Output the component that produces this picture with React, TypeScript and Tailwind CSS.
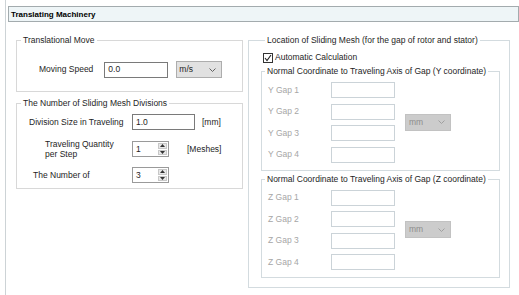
import React from 'react'

const Y_ROWS = ['Y Gap 1', 'Y Gap 2', 'Y Gap 3', 'Y Gap 4']
const Z_ROWS = ['Z Gap 1', 'Z Gap 2', 'Z Gap 3', 'Z Gap 4']

function Chevron({ color = '#606060' }: { color?: string }) {
  return (
    <svg width="7" height="4" viewBox="0 0 7 4" className="shrink-0">
      <polyline points="0.5,0.5 3.5,3.5 6.5,0.5" fill="none" stroke={color} strokeWidth="1" />
    </svg>
  )
}

function Select({ value, disabled }: { value: string; disabled?: boolean }) {
  return (
    <div
      className={
        disabled
          ? 'flex items-center justify-between w-[46px] h-[17px] border border-[#c2c2c2] bg-[#cccccc] pl-[3px] pr-[5px] text-[#8c8c8c]'
          : 'flex items-center justify-between w-[46px] h-[17px] border border-[#adadad] bg-[#e1e1e1] pl-[2px] pr-[5px]'
      }
    >
      <span>{value}</span>
      <Chevron color={disabled ? '#a0a0a0' : '#606060'} />
    </div>
  )
}

function TextBox({ value = '', width, disabled }: { value?: string; width: string; disabled?: boolean }) {
  return (
    <div
      className={`${width} h-[16px] flex items-center pl-[3px] bg-white border ${
        disabled ? 'border-[#cbd3d8]' : 'border-[#7a7a7a]'
      }`}
    >
      {value}
    </div>
  )
}

function Spinner({ value }: { value: string }) {
  return (
    <div className="flex w-[37px] h-[16px] border border-[#9a9a9a] bg-white">
      <span className="flex-1 flex items-center pl-[3px]">{value}</span>
      <div className="w-[11px] flex flex-col gap-px p-px">
        <div className="flex-1 flex items-center justify-center bg-[#e8e8e8] border border-[#c8c8c8]">
          <svg width="5" height="3" viewBox="0 0 5 3"><polygon points="2.5,0 5,3 0,3" fill="#333" /></svg>
        </div>
        <div className="flex-1 flex items-center justify-center bg-[#e8e8e8] border border-[#c8c8c8]">
          <svg width="5" height="3" viewBox="0 0 5 3"><polygon points="0,0 5,0 2.5,3" fill="#333" /></svg>
        </div>
      </div>
    </div>
  )
}

function GapGroup({ title, rows }: { title: string; rows: string[] }) {
  return (
    <fieldset className="border border-[#d3dbdf] flex">
      <legend className="ml-[3px] px-[2px]">{title}</legend>
      <div className="flex items-center pl-[6px] pt-[5px] pb-[7px]">
        <div className="flex flex-col gap-[5.5px]">
          {rows.map(r => (
            <div key={r} className="flex items-center">
              <span className="w-[63px] text-[#a6a6a6]">{r}</span>
              <TextBox width="w-[64px]" disabled />
            </div>
          ))}
        </div>
        <div className="ml-[10px]">
          <Select value="mm" disabled />
        </div>
      </div>
    </fieldset>
  )
}

export default function App() {
  return (
    <div className="w-[519px] h-[295px] bg-white pl-[5px] overflow-hidden font-['Liberation_Sans',Arial,sans-serif] text-[8.5px] leading-[11px] text-[#1e1e1e]">
      <div className="h-full border-l border-[#cdd3d6] pl-[2px] pt-[6px]">
        <div className="h-[16px] flex items-center pl-[2px] border border-[#a3abae] bg-[#eef5f7] font-bold text-[8px] text-black">
          Translating Machinery
        </div>

        <div className="flex pl-[8px] pt-[13px] gap-[5px]">
          {/* left column */}
          <div className="w-[227px] flex flex-col gap-[6px]">
            <fieldset className="h-[57px] border border-[#d8d8d8]">
              <legend className="ml-[4px] px-[2px]">Translational Move</legend>
              <div className="flex items-center pl-[22px] pt-[15px]">
                <span>Moving Speed</span>
                <div className="ml-[11px]">
                  <TextBox value="0.0" width="w-[64px]" />
                </div>
                <div className="ml-[8px]">
                  <Select value="m/s" />
                </div>
              </div>
            </fieldset>

            <fieldset className="h-[91px] border border-[#d8d8d8]">
              <legend className="ml-[4px] px-[2px]">The Number of Sliding Mesh Divisions</legend>
              <div className="flex flex-col pt-[5px]">
                <div className="flex items-center">
                  <span className="w-[115px] pl-[12px]">Division Size in Traveling</span>
                  <TextBox value="1.0" width="w-[63px]" />
                  <span className="ml-[7px]">[mm]</span>
                </div>
                <div className="flex items-center mt-[9px]">
                  <span className="w-[115px] pl-[28px] leading-[10px]">Traveling Quantity<br />per Step</span>
                  <Spinner value="1" />
                  <span className="ml-[18px]">[Meshes]</span>
                </div>
                <div className="flex items-center mt-[8px]">
                  <span className="w-[115px] pl-[16px]">The Number of</span>
                  <Spinner value="3" />
                </div>
              </div>
            </fieldset>
          </div>

          {/* right column */}
          <fieldset className="w-[262px] h-[253px] border border-[#d3dbdf] pl-[12px] pr-[9px]">
            <legend className="ml-[4px] px-[2px]">Location of Sliding Mesh (for the gap of rotor and stator)</legend>
            <label className="flex items-center ml-[2px] mt-[6px] h-[11px] gap-[2px]">
              <span className="w-[10px] h-[10px] border border-[#333] bg-white flex items-center justify-center">
                <svg width="8" height="8" viewBox="0 0 8 8">
                  <polyline points="1,4 3,6.5 7,1" fill="none" stroke="#222" strokeWidth="1.1" />
                </svg>
              </span>
              <span>Automatic Calculation</span>
            </label>
            <div className="flex flex-col gap-[3px] mt-[3px]">
              <GapGroup title="Normal Coordinate to Traveling Axis of Gap (Y coordinate)" rows={Y_ROWS} />
              <GapGroup title="Normal Coordinate to Traveling Axis of Gap (Z coordinate)" rows={Z_ROWS} />
            </div>
          </fieldset>
        </div>
      </div>
    </div>
  )
}
